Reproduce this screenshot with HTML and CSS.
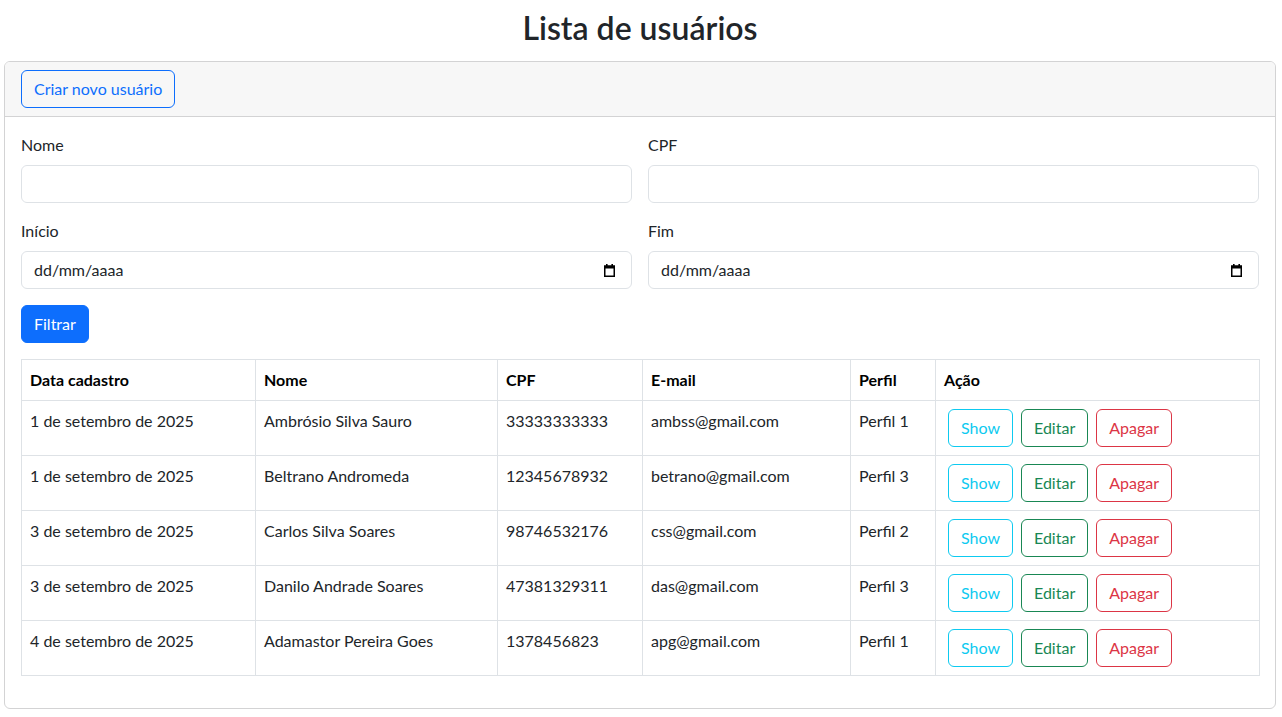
FILE: index.html
```html
<!DOCTYPE html>
<html lang="pt-BR">
<head>
<meta charset="utf-8">
<title>Lista de usuários</title>
<link rel="stylesheet" href="styles.css">
</head>
<body>
<div class="page">
  <h2 class="title">Lista de usuários</h2>
  <div class="card">
    <div class="card-header">
      <a class="btn btn-outline-primary" href="#">Criar novo usuário</a>
    </div>
    <div class="card-body">
      <form class="filters">
        <div class="field">
          <label class="form-label">Nome</label>
          <input class="form-control" type="text">
        </div>
        <div class="field">
          <label class="form-label">CPF</label>
          <input class="form-control" type="text">
        </div>
        <div class="field">
          <label class="form-label">Início</label>
          <div class="form-control date-control">
            <span>dd/mm/aaaa</span>
            <svg class="cal-icon" width="11" height="13" viewBox="0 0 11 13"><rect x="2" y="0" width="1.6" height="2" fill="#000"/><rect x="7.4" y="0" width="1.6" height="2" fill="#000"/><rect x="0.75" y="2.25" width="9.5" height="10" fill="none" stroke="#000" stroke-width="1.5"/><rect x="0" y="1.5" width="11" height="3" fill="#000"/></svg>
          </div>
        </div>
        <div class="field">
          <label class="form-label">Fim</label>
          <div class="form-control date-control">
            <span>dd/mm/aaaa</span>
            <svg class="cal-icon" width="11" height="13" viewBox="0 0 11 13"><rect x="2" y="0" width="1.6" height="2" fill="#000"/><rect x="7.4" y="0" width="1.6" height="2" fill="#000"/><rect x="0.75" y="2.25" width="9.5" height="10" fill="none" stroke="#000" stroke-width="1.5"/><rect x="0" y="1.5" width="11" height="3" fill="#000"/></svg>
          </div>
        </div>
      </form>
      <button class="btn btn-primary" type="button">Filtrar</button>
      <table class="table">
        <colgroup>
          <col class="c-data"><col class="c-nome"><col class="c-cpf"><col class="c-email"><col class="c-perfil"><col class="c-acao">
        </colgroup>
        <thead>
          <tr><th>Data cadastro</th><th>Nome</th><th>CPF</th><th>E-mail</th><th>Perfil</th><th>Ação</th></tr>
        </thead>
        <tbody>
          <tr><td>1 de setembro de 2025</td><td>Ambrósio Silva Sauro</td><td>33333333333</td><td>ambss@gmail.com</td><td>Perfil 1</td>
            <td><div class="actions"><a class="btn btn-outline-info" href="#">Show</a><a class="btn btn-outline-success" href="#">Editar</a><a class="btn btn-outline-danger" href="#">Apagar</a></div></td></tr>
          <tr><td>1 de setembro de 2025</td><td>Beltrano Andromeda</td><td>12345678932</td><td>betrano@gmail.com</td><td>Perfil 3</td>
            <td><div class="actions"><a class="btn btn-outline-info" href="#">Show</a><a class="btn btn-outline-success" href="#">Editar</a><a class="btn btn-outline-danger" href="#">Apagar</a></div></td></tr>
          <tr><td>3 de setembro de 2025</td><td>Carlos Silva Soares</td><td>98746532176</td><td>css@gmail.com</td><td>Perfil 2</td>
            <td><div class="actions"><a class="btn btn-outline-info" href="#">Show</a><a class="btn btn-outline-success" href="#">Editar</a><a class="btn btn-outline-danger" href="#">Apagar</a></div></td></tr>
          <tr><td>3 de setembro de 2025</td><td>Danilo Andrade Soares</td><td>47381329311</td><td>das@gmail.com</td><td>Perfil 3</td>
            <td><div class="actions"><a class="btn btn-outline-info" href="#">Show</a><a class="btn btn-outline-success" href="#">Editar</a><a class="btn btn-outline-danger" href="#">Apagar</a></div></td></tr>
          <tr><td>4 de setembro de 2025</td><td>Adamastor Pereira Goes</td><td>1378456823</td><td>apg@gmail.com</td><td>Perfil 1</td>
            <td><div class="actions"><a class="btn btn-outline-info" href="#">Show</a><a class="btn btn-outline-success" href="#">Editar</a><a class="btn btn-outline-danger" href="#">Apagar</a></div></td></tr>
        </tbody>
      </table>
    </div>
  </div>
</div>
</body>
</html>
```
FILE: styles.css
```css
*, *::before, *::after { box-sizing: border-box; }

html, body {
  margin: 0;
  background: #fff;
}

body {
  font-family: Lato, "Open Sans", "Liberation Sans", sans-serif;
  font-size: 16px;
  line-height: 1.5;
  color: #212529;
}

.page {
  width: 1280px;
}

.title {
  margin: 9px 0 14px;
  font-size: 32px;
  line-height: 38px;
  font-weight: 600;
  text-align: center;
}

.card {
  margin: 0 4px;
  border: 1px solid #d3d3d4;
  border-radius: 6px;
  background: #fff;
  overflow: hidden;
}

.card-header {
  padding: 8px 16px;
  background: #f7f7f7;
  border-bottom: 1px solid #d3d3d4;
}

.card-body {
  padding: 16px;
}

.btn {
  display: inline-block;
  padding: 6px 12px;
  font-family: inherit;
  font-size: 16px;
  line-height: 24px;
  font-weight: 400;
  text-decoration: none;
  border: 1px solid transparent;
  border-radius: 6px;
  background: transparent;
  cursor: pointer;
}

.btn-outline-primary { color: #0d6efd; border-color: #0d6efd; }
.btn-primary { color: #fff; background: #0d6efd; border-color: #0d6efd; }
.btn-outline-info { color: #0dcaf0; border-color: #0dcaf0; }
.btn-outline-success { color: #198754; border-color: #198754; }
.btn-outline-danger { color: #dc3545; border-color: #dc3545; }

.filters {
  display: grid;
  grid-template-columns: 1fr 1fr;
  column-gap: 16px;
  row-gap: 16px;
  margin: 0 0 16px;
}

.field {
  display: flex;
  flex-direction: column;
}

.form-label {
  display: block;
  margin-bottom: 8px;
  line-height: 24px;
}

.form-control {
  display: block;
  width: 100%;
  height: 38px;
  padding: 6px 12px;
  font-family: inherit;
  font-size: 16px;
  line-height: 24px;
  color: #212529;
  background: #fff;
  border: 1px solid #dee2e6;
  border-radius: 6px;
  outline: none;
}

.date-control {
  display: flex;
  align-items: center;
  justify-content: space-between;
  padding-right: 16px;
}

.cal-icon {
  display: block;
  flex: none;
}

.table {
  width: 100%;
  margin: 16px 0 16px;
  border-collapse: collapse;
  table-layout: fixed;
  vertical-align: top;
  border: 1px solid #dee2e6;
}

.c-data { width: 234px; }
.c-nome { width: 242px; }
.c-cpf { width: 145px; }
.c-email { width: 208px; }
.c-perfil { width: 85px; }
.c-acao { width: 324px; }

.table th,
.table td {
  padding: 8px;
  border: 1px solid #dee2e6;
  text-align: left;
  vertical-align: top;
  line-height: 24px;
  white-space: nowrap;
}

.table th {
  font-weight: 700;
  color: #000;
}

.table td {
  color: #212529;
}

.actions {
  display: flex;
  gap: 8px;
  padding-left: 4px;
}
```
